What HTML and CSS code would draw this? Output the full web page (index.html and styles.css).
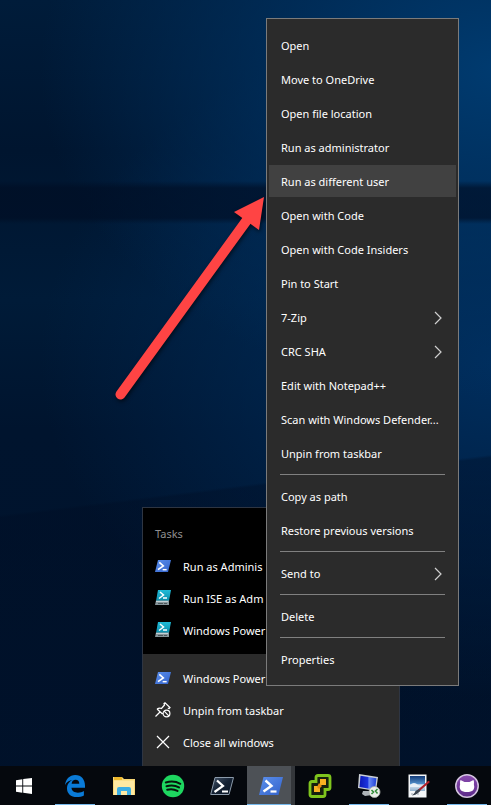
FILE: index.html
```html
<!DOCTYPE html>
<html lang="en">
<head>
<meta charset="utf-8">
<meta name="viewport" content="width=device-width, initial-scale=1">
<title>Desktop</title>
<link rel="stylesheet" href="styles.css">
</head>
<body>
<svg class="defs" aria-hidden="true">
  <defs>
    <linearGradient id="blue" x1="0" y1="0" x2="1" y2="1"><stop offset="0" stop-color="#5c90ec"/><stop offset="1" stop-color="#3262cb"/></linearGradient>
    <linearGradient id="teal" x1="0" y1="0" x2="0" y2="1"><stop offset="0" stop-color="#20bcd8"/><stop offset="1" stop-color="#0b8ba9"/></linearGradient>
    <linearGradient id="night" x1="0" y1="0" x2="1" y2="1"><stop offset="0" stop-color="#46576b"/><stop offset=".5" stop-color="#142133"/><stop offset="1" stop-color="#0a1422"/></linearGradient>
    <linearGradient id="screen" x1="0" y1="0" x2="1" y2="0"><stop offset="0" stop-color="#0b18b4"/><stop offset=".5" stop-color="#1c35e0"/><stop offset=".55" stop-color="#6b8df5"/><stop offset="1" stop-color="#1d3fd6"/></linearGradient>
    <linearGradient id="sky" x1="0" y1="0" x2="0" y2="1"><stop offset="0" stop-color="#123a78"/><stop offset=".5" stop-color="#4f8cc6"/><stop offset=".6" stop-color="#dbe9f4"/><stop offset="1" stop-color="#8fb0cc"/></linearGradient>
    <linearGradient id="violet" x1="0" y1="0" x2="0" y2="1"><stop offset="0" stop-color="#8a4bb0"/><stop offset="1" stop-color="#5c2a88"/></linearGradient>
  </defs>
  <symbol id="ps" viewBox="0 0 24 18">
    <path d="M4.500 0h19.500L19.500 18H0z" fill="url(#blue)"/>
    <path d="M6.500 3.500l6 5.300-8 5.700" fill="none" stroke="#fff" stroke-width="2.400"/>
    <path d="M11.500 14.500h6" stroke="#fff" stroke-width="2.200"/>
  </symbol>
  <symbol id="ise" viewBox="0 0 16 16">
    <path d="M3 0h13l-2 11H1z" fill="url(#teal)"/>
    <path d="M5 2l3.500 3L4 8.500M8 8h4" fill="none" stroke="#fff" stroke-width="1.500"/>
    <path d="M1 10.500h13V15H0z" fill="#87959a"/>
    <path d="M1 11.500h12" stroke="#c3ced2"/><path d="M3 13.500h5M9 13.500h3" stroke="#4b5559"/>
  </symbol>
</svg>
<main class="desktop">
  <section class="jump-list" aria-label="Jump list">
    <div class="jump-group tasks">
      <h2>Tasks</h2>
      <button class="jump-item"><svg class="ps-small"><use href="#ps"/></svg><span>Run as Adminis</span></button>
      <button class="jump-item"><svg><use href="#ise"/></svg><span>Run ISE as Adm</span></button>
      <button class="jump-item"><svg><use href="#ise"/></svg><span>Windows Power</span></button>
    </div>
    <div class="jump-group">
      <button class="jump-item"><svg class="ps-small"><use href="#ps"/></svg><span>Windows Power</span></button>
      <button class="jump-item"><svg viewBox="0 0 16 16" fill="none" stroke="#fff" stroke-width="1.200"><path d="M.5 14.500L5 10M2 7l5.500 5M2 7q2.500-1.500 4.500-.5L9.500 3 9 1.500 10 .800 15 5.600l-.8 1-1.400-.4M7.500 12v-1"/><circle cx="11.500" cy="11.500" r="3.400"/><path d="M9.200 9.200l4.600 4.600"/></svg><span>Unpin from taskbar</span></button>
      <button class="jump-item"><svg viewBox="0 0 16 16" fill="none" stroke="#fff" stroke-width="1.200"><path d="M2 2l12 12M14 2L2 14"/></svg><span>Close all windows</span></button>
    </div>
  </section>

  <svg class="arrow" viewBox="0 0 160 216" aria-hidden="true">
    <path d="M10.500 204.500L137 30" fill="none" stroke="#ff4444" stroke-width="10" stroke-linecap="round"/>
    <path d="M154 7l-5 33-25-18z" fill="#ff4444"/>
  </svg>

  <nav class="context-menu" aria-label="Context menu">
    <button>Open</button>
    <button>Move to OneDrive</button>
    <button>Open file location</button>
    <button>Run as administrator</button>
    <button class="active">Run as different user</button>
    <button>Open with Code</button>
    <button>Open with Code Insiders</button>
    <button>Pin to Start</button>
    <button>7-Zip<svg viewBox="0 0 8 14"><path d="M1 1l6 6-6 6"/></svg></button>
    <button>CRC SHA<svg viewBox="0 0 8 14"><path d="M1 1l6 6-6 6"/></svg></button>
    <button>Edit with Notepad++</button>
    <button>Scan with Windows Defender...</button>
    <button>Unpin from taskbar</button>
    <hr>
    <button>Copy as path</button>
    <button>Restore previous versions</button>
    <hr>
    <button>Send to<svg viewBox="0 0 8 14"><path d="M1 1l6 6-6 6"/></svg></button>
    <hr>
    <button>Delete</button>
    <hr>
    <button>Properties</button>
  </nav>
</main>

<footer class="taskbar">
  <button class="start" aria-label="Start"><svg viewBox="0 0 24 24" fill="#fff"><path d="M4 6.300l6.300-1v6.200H4zM11.200 5.100L20 4v7.500h-8.800zM4 12.500h6.300v6.200l-6.300-1zM11.200 12.500H20V20l-8.800-1.200z"/></svg></button>
  <button class="open" aria-label="Edge"><svg viewBox="0 0 24 24"><path d="M2 11C2.700 5.200 6.600 1 12.200 1 18.600 1 22 5.700 22 11.500v2.300H8.500c.2 3.400 3.100 4.900 6.400 4.900 2.200 0 4.400-.7 6-1.700v4.500c-1.800 1-4.500 1.500-7 1.500C7.700 23 4 19.300 4 14.400 4 10.300 6.300 7.400 9.700 6 6.100 6.300 3.600 8.200 2 11zm6.600-1.300h7.700c0-2.600-1.400-4-3.700-4S8.900 7.200 8.600 9.700z" fill="#0a7bd8"/></svg></button>
  <button aria-label="File Explorer"><svg viewBox="0 0 24 24"><path d="M1 3h9l2 2h11v16H1z" fill="#f8d775"/><path d="M2 3h8v3H2z" fill="#eeb82c"/><path d="M2 6.500h20V21H2z" fill="#ffe9a2"/><path d="M5 21v-6q0-2 2-2h10q2 0 2 2v6h-4v-4H9v4z" fill="#3caee4"/></svg></button>
  <button aria-label="Spotify"><svg viewBox="0 0 24 24"><circle cx="12" cy="12" r="11.200" fill="#1ed760"/><path d="M4.800 8.500q8-2.300 14.500 1.300M5.500 12.200q7-1.900 12.500 1.200M6.200 15.700q5.500-1.500 10.300 1.200" fill="none" stroke="#07150c" stroke-width="2" stroke-linecap="round"/></svg></button>
  <button aria-label="PowerShell Core"><svg viewBox="0 0 24 24"><path d="M5 3.500h18.500l-4.500 17H.7z" fill="url(#night)" stroke="#8c9bab"/><path d="M7 6.500l6 5.500-8.500 6" fill="none" stroke="#fff" stroke-width="2.200"/><path d="M12 17.500h6" stroke="#fff" stroke-width="2"/></svg></button>
  <button class="open current" aria-label="Windows PowerShell"><svg><use href="#ps"/></svg></button>
  <button aria-label="PuTTY Manager"><svg viewBox="0 0 24 24"><path d="M10 1.500h10q2 0 2 2v10q0 2-2 2h-3v5q0 2-2 2H4q-2 0-2-2v-11q0-2 2-2h4v-4q0-2 2-2z" fill="#17200d" stroke="#7fc51d" stroke-width="2.800"/><path d="M12 5h6v6h-6zM6 12h6v6H6z" fill="#f9b122"/><path d="M11 9l3 3-3 3-2-2z" fill="#e48b12"/></svg></button>
  <button class="open" aria-label="Remote Desktop"><svg viewBox="0 0 24 24"><path d="M6 17h8l1 4-7 1-3-2z" fill="#aeb4b8"/><path d="M2 0l19 3-2 14L1 14z" fill="#cbd0d6"/><path d="M3.500 1.800l16 2.500-1.500 11.500L2.500 13z" fill="url(#screen)"/><circle cx="17.500" cy="18" r="5.500" fill="#e9ede8" stroke="#a9b0a8" stroke-width=".8"/><path d="M14.500 16l2 2-2 2M20.500 15l-2 2 2 2.500" fill="none" stroke="#2f8a35" stroke-width="1.500"/></svg></button>
  <button aria-label="Image Editor"><svg viewBox="0 0 24 24"><path d="M2.500.5h18v23h-18z" fill="#f4f6f8"/><path d="M4 2h15v15H4z" fill="url(#sky)"/><path d="M4 11q4-4 8 0t7-1v3H4z" fill="#e9f1f7"/><path d="M5 20h9" stroke="#9aa5b0" stroke-dasharray="2 1"/><path d="M22.500 8L12 17" stroke="#b21f28" stroke-width="2.200" stroke-linecap="round"/><path d="M13 15l1.500 1.800Q11 21 6 21.500q3-2 3.500-4.500z" fill="#38424e"/></svg></button>
  <button class="open" aria-label="GitHub Desktop"><svg viewBox="0 0 24 24"><circle cx="12" cy="12" r="11.200" fill="url(#violet)" stroke="#d4c5df" stroke-width="1.500"/><path d="M5.500 6l4 2h5l4-2q.9 2 .4 4.500c1.400 5-1.200 7.500-6.900 7.500s-8.300-2.500-6.900-7.500Q4.600 8 5.500 6z" fill="#fff"/></svg></button>
</footer>
</body>
</html>
```

FILE: styles.css
```css
* { box-sizing: border-box; }

body {
  margin: 0;
  min-height: 100vh;
  display: flex;
  flex-direction: column;
  overflow: hidden;
  color: #fff;
  background: #00132c;
  font: 11px/16px "Noto Sans", "Open Sans", sans-serif;
}

button {
  border: 0;
  padding: 0;
  background: none;
  color: inherit;
  font: inherit;
  text-align: left;
}

.defs { position: absolute; width: 0; height: 0; }

.desktop {
  position: relative;
  flex: 1;
  background:
    linear-gradient(173deg, transparent 511px, rgba(0, 12, 34, .35) 514px, rgba(0, 12, 34, .2) 100%),
    linear-gradient(180deg, transparent 181px, rgba(0, 13, 35, .65) 188px, rgba(0, 13, 35, .65) 218px, transparent 224px),
    radial-gradient(ellipse 460px 330px at 500px 70px, #003b70 0%, rgba(0, 50, 98, .75) 45%, transparent 100%),
    radial-gradient(ellipse 460px 340px at 500px 360px, #002e5e 0%, transparent 100%),
    linear-gradient(180deg, #001c3a 0, #00152f 150px, #001b38 300px, #00142e 430px, #00132c 100%);
}

.jump-list {
  position: absolute;
  left: 142px;
  bottom: 0;
  width: 258px;
  border: 1px solid #2e3542;
  border-bottom: 0;
  background: #2b2b2b;
}

.jump-group { padding: 8px 12px; }
.tasks { padding-top: 10px; background: #000; }

.jump-list h2 {
  margin: 0;
  font: inherit;
  line-height: 32px;
  color: #8f8f8f;
}

.jump-item {
  display: flex;
  align-items: center;
  gap: 12px;
  width: 100%;
  height: 32px;
  white-space: nowrap;
}

.jump-item svg { flex: none; width: 16px; height: 16px; }
.jump-item .ps-small { height: 12px; }
.jump-item span { padding-top: 2px; }

.arrow {
  position: absolute;
  left: 110px;
  top: 190px;
  width: 160px;
  height: 216px;
  filter: drop-shadow(1px 2px 2px rgba(0, 0, 0, .6));
}

.context-menu {
  position: absolute;
  left: 266px;
  top: 18px;
  width: 193px;
  display: flex;
  flex-direction: column;
  gap: 2px;
  padding: 10px 2px;
  border: 1px solid #7b7b7b;
  background: #2b2b2b;
}

.context-menu button {
  display: flex;
  align-items: center;
  justify-content: space-between;
  height: 32px;
  padding: 2px 14px 0 12px;
  white-space: nowrap;
}

.context-menu .active { background: #414141; }

.context-menu svg {
  width: 8px;
  height: 14px;
  fill: none;
  stroke: #d0d0d0;
  stroke-width: 1.2;
}

.context-menu hr {
  width: auto;
  height: 1px;
  margin: 3px 11px;
  border: 0;
  background: #808080;
}

.taskbar {
  display: grid;
  grid-template-columns: 50px repeat(9, 48px);
  gap: 1px;
  height: 39px;
  background: #05080d;
}

.taskbar button {
  display: grid;
  place-items: center;
  position: relative;
}

.taskbar .start { padding-right: 2px; }

.taskbar svg { width: 24px; height: 24px; }

.open::after {
  content: "";
  position: absolute;
  left: 4px;
  right: 4px;
  bottom: 0;
  height: 1px;
  background: #76b9ed;
}

.taskbar .current {
  border-right: 4px solid #34373b;
  padding-left: 4px;
  background: #4d5156;
}

.current::after { left: 0; right: 0; }
```
